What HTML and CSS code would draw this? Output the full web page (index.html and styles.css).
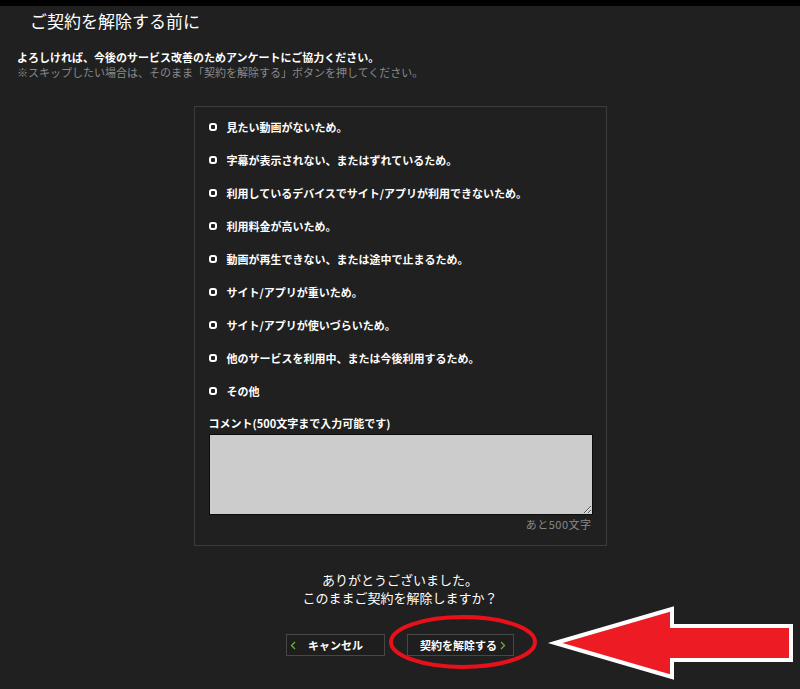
FILE: index.html
```html
<!DOCTYPE html>
<html lang="ja">
<head>
    <meta charset="UTF-8">
    <title>ご契約を解除する前に</title>
    <link rel="stylesheet" href="styles.css">
</head>
<body>
    <div class="page">
        <h1 class="title">ご契約を解除する前に</h1>
        <div class="intro">
            <p class="lead">よろしければ、今後のサービス改善のためアンケートにご協力ください。</p>
            <p class="note">※スキップしたい場合は、そのまま「契約を解除する」ボタンを押してください。</p>
        </div>

        <div class="survey">
            <ul class="reasons">
                <li><span class="box"></span>見たい動画がないため。</li>
                <li><span class="box"></span>字幕が表示されない、またはずれているため。</li>
                <li><span class="box"></span>利用しているデバイスでサイト/アプリが利用できないため。</li>
                <li><span class="box"></span>利用料金が高いため。</li>
                <li><span class="box"></span>動画が再生できない、または途中で止まるため。</li>
                <li><span class="box"></span>サイト/アプリが重いため。</li>
                <li><span class="box"></span>サイト/アプリが使いづらいため。</li>
                <li><span class="box"></span>他のサービスを利用中、または今後利用するため。</li>
                <li><span class="box"></span>その他</li>
            </ul>
            <p class="label">コメント(500文字まで入力可能です)</p>
            <textarea class="comment"></textarea>
            <p class="count">あと500文字</p>
        </div>

        <div class="thanks">
            <p>ありがとうございました。</p>
            <p>このままご契約を解除しますか？</p>
        </div>

        <div class="actions">
            <button class="btn cancel">
                <svg width="6" height="9" viewBox="0 0 6 9"><path d="M5 1 L1.5 4.5 L5 8" fill="none" stroke="#6fae3c" stroke-width="1.3"/></svg>
                キャンセル
            </button>
            <button class="btn quit">
                契約を解除する
                <svg width="6" height="9" viewBox="0 0 6 9"><path d="M1 1 L4.5 4.5 L1 8" fill="none" stroke="#6fae3c" stroke-width="1.3"/></svg>
            </button>
        </div>
    </div>

    <!-- annotation drawn over the screenshot -->
    <svg class="mark" width="800" height="689" viewBox="0 0 800 689">
        <ellipse cx="463" cy="642" rx="72" ry="25" fill="none" stroke="#e8111b" stroke-width="4"/>
        <polygon points="555,643 672,609 672,626 791,626 791,660 672,660 672,677" fill="#ed1c24" stroke="#fff" stroke-width="4" stroke-linejoin="miter"/>
    </svg>
</body>
</html>
```

FILE: styles.css
```css
body{
    margin: 0;
    background-color: #202020;
    border-top: 6px solid #000;
    font-family: "Noto Sans CJK JP", "Noto Sans", sans-serif;
    color: #fff;
    position: relative;
    height: 683px;
    overflow: hidden;
}
p{
    margin: 0;
}
.title{
    margin: 0;
    padding: 3px 0 0 30px;
    font-size: 17px;
    font-weight: 400;
    line-height: 23px;
}
.intro{
    padding: 18px 0 0 17px;
    font-size: 11px;
    line-height: 15px;
}
.lead{
    font-weight: 700;
}
.note{
    color: #8a8a8a;
}
.survey{
    width: 384px;
    margin: 26px auto 0;
    padding: 3px 13px 12px 14px;
    border: 1px solid #3c3c3c;
}
.reasons{
    list-style: none;
    margin: 0;
    padding: 0;
}
.reasons li{
    height: 33px;
    display: flex;
    align-items: center;
    font-size: 11px;
    font-weight: 700;
}
.box{
    width: 4px;
    height: 4px;
    border: 2px solid #fff;
    border-radius: 3px;
    margin: 0 10px 0 0;
}
.label{
    height: 22px;
    margin-top: 5px;
    display: flex;
    align-items: center;
    font-size: 11px;
    font-weight: 700;
}
.comment{
    display: block;
    width: 384px;
    height: 81px;
    box-sizing: border-box;
    margin: 0;
    background-color: #cccccc;
    border: 1px solid #0c0c0c;
    resize: both;
}
.count{
    text-align: right;
    padding-right: 1px;
    color: #8a8a8a;
    font-size: 11px;
    line-height: 18px;
    letter-spacing: 0.5px;
}
.thanks{
    margin-top: 25px;
    text-align: center;
    font-size: 13px;
    line-height: 18px;
}
.actions{
    display: flex;
    justify-content: center;
    gap: 22px;
    margin-top: 27px;
}
.btn{
    height: 22px;
    display: flex;
    align-items: center;
    box-sizing: border-box;
    background-color: #1e1e1e;
    border: 1px solid #474747;
    color: #fff;
    font-family: inherit;
    font-size: 11px;
    font-weight: 700;
    white-space: nowrap;
    padding: 0;
}
.cancel{
    width: 99px;
    gap: 12px;
    padding-left: 3px;
}
.quit{
    width: 107px;
    justify-content: space-between;
    padding: 0 7px 0 12px;
}
.mark{
    position: absolute;
    left: 0;
    top: -6px;
    pointer-events: none;
}
```
